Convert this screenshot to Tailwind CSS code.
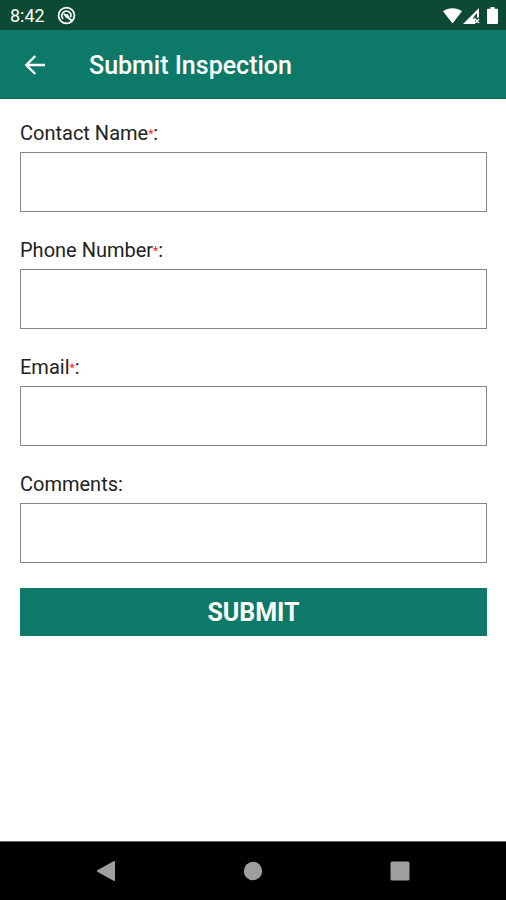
<!DOCTYPE html>
<html lang="en">
<head>
<meta charset="utf-8">
<meta name="viewport" content="width=device-width, initial-scale=1">
<title>Submit Inspection</title>
<script src="https://cdn.jsdelivr.net/npm/@tailwindcss/browser@4"></script>
</head>
<body class="flex min-h-screen flex-col bg-white font-[Roboto,sans-serif] text-[#222]">
  <div class="flex h-[30px] items-center justify-between bg-[#0d4a34] pt-px pr-2 pl-[10px] text-white">
    <div class="flex items-center gap-3">
      <span class="text-lg leading-5">8:42</span>
      <svg class="size-[19px]" viewBox="0 0 19 19" fill="none" stroke="currentColor" aria-hidden="true">
        <circle cx="9.5" cy="9.5" r="7.900" stroke-width="1.800"/>
        <path d="M6.200 12.800A4.500 4.500 0 1 1 13.600 11.300" stroke-width="1.600"/>
        <path d="M7 8 14.800 14.800" stroke-width="1.800"/>
        <path d="M7.500 8.300h3.300l1.500 2.400v2.200l-3.600-1.500z" fill="currentColor" stroke="none"/>
      </svg>
    </div>
    <div class="flex items-center" aria-hidden="true">
      <svg class="h-4 w-[19px]" viewBox="0 0 19 16" fill="currentColor"><path d="M0 3.3C5.2-.9 13.8-.9 19 3.3L9.5 15.5z"/></svg>
      <svg class="ml-px h-4 w-[17px]" viewBox="0 0 17 16"><path d="M0 16 16 0v9.500h-4V16z" fill="currentColor"/><path d="M9.500 10.500 14 5v4.500h-2.500v1z" fill="#0d4a34"/><path d="m12 11 4 4m0-4-4 4" stroke="currentColor" stroke-width="1.500"/></svg>
      <svg class="ml-[7px] h-[17px] w-[11px]" viewBox="0 0 11 17" fill="currentColor"><path d="M3.500 0h4v1.700H10a1 1 0 0 1 1 1V16a1 1 0 0 1-1 1H1a1 1 0 0 1-1-1V2.700a1 1 0 0 1 1-1h2.500z"/></svg>
    </div>
  </div>

  <header class="flex h-[69px] items-center gap-[42px] border-b border-[#0a6656] bg-[#0d7968] pt-[3px] pl-[23px] text-white">
    <button type="button" aria-label="Back" class="size-6">
      <svg class="size-6" viewBox="0 0 24 24" fill="none" stroke="currentColor" stroke-width="2.400"><path d="M22 11H4M12.300 2l-9 9 9 9"/></svg>
    </button>
    <h1 class="text-[25px] leading-8 font-medium">Submit Inspection</h1>
  </header>

  <main class="flex-1 pt-[22px] pr-[19px] pl-5">
    <form class="flex flex-col gap-[25px]">
      <div class="flex flex-col gap-[26px]">
        <div>
          <label for="name" class="block text-xl leading-6">Contact Name<span class="align-[2px] text-xs leading-none text-[#ff2020]">*</span>:</label>
          <input id="name" type="text" required class="mt-[7px] block h-[60px] w-full border border-[#858585] px-3 text-xl">
        </div>
        <div>
          <label for="phone" class="block text-xl leading-6">Phone Number<span class="align-[2px] text-xs leading-none text-[#ff2020]">*</span>:</label>
          <input id="phone" type="tel" required class="mt-[7px] block h-[60px] w-full border border-[#858585] px-3 text-xl">
        </div>
        <div>
          <label for="email" class="block text-xl leading-6">Email<span class="align-[2px] text-xs leading-none text-[#ff2020]">*</span>:</label>
          <input id="email" type="email" required class="mt-[7px] block h-[60px] w-full border border-[#858585] px-3 text-xl">
        </div>
        <div>
          <label for="comments" class="block text-xl leading-6">Comments:</label>
          <input id="comments" type="text" class="mt-[7px] block h-[60px] w-full border border-[#858585] px-3 text-xl">
        </div>
      </div>
      <button type="submit" class="h-12 bg-[#0d7968] pt-[2px] text-[25px] leading-8 font-bold text-white">SUBMIT</button>
    </form>
  </main>

  <nav class="grid h-[59px] grid-cols-3 items-center justify-items-center border-t border-[#666] bg-black px-[33px] text-[#9e9e9e]">
    <button type="button" aria-label="Back"><svg class="size-5" viewBox="0 0 20 20" fill="currentColor"><path d="M1.300 9.300 17.500.3c.8-.5 1.500-.2 1.500.6v18.200c0 .8-.7 1.100-1.500.6L1.300 10.700c-.6-.4-.6-1 0-1.400z"/></svg></button>
    <button type="button" aria-label="Home"><svg class="size-5" viewBox="0 0 20 20" fill="currentColor"><circle cx="10" cy="10" r="9.200"/></svg></button>
    <button type="button" aria-label="Recent apps"><svg class="size-5" viewBox="0 0 20 20" fill="currentColor"><rect x=".5" y=".5" width="19" height="19" rx="1.500"/></svg></button>
  </nav>
</body>
</html>
